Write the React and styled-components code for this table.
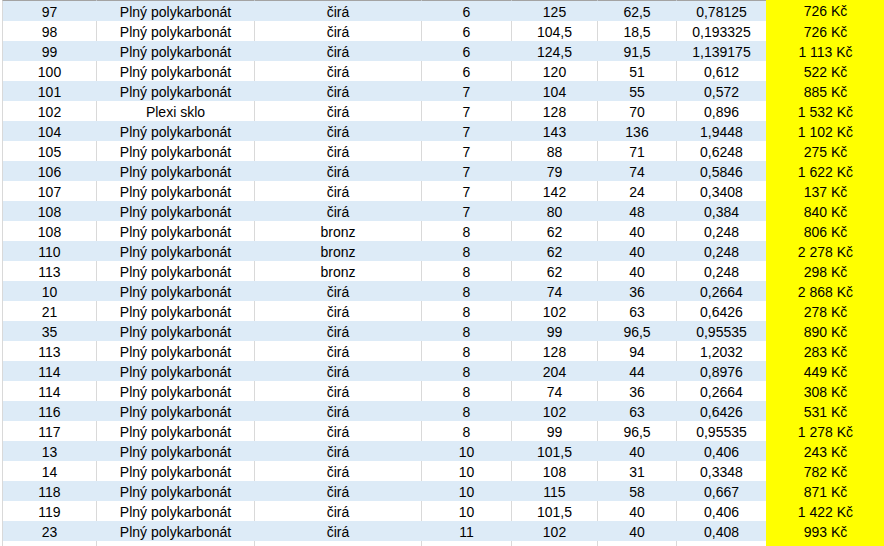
import React from 'react';
import styled, { createGlobalStyle } from 'styled-components';

const rows = [
  ['97', 'Plný polykarbonát', 'čirá', '6', '125', '62,5', '0,78125', '726 Kč'],
  ['98', 'Plný polykarbonát', 'čirá', '6', '104,5', '18,5', '0,193325', '726 Kč'],
  ['99', 'Plný polykarbonát', 'čirá', '6', '124,5', '91,5', '1,139175', '1 113 Kč'],
  ['100', 'Plný polykarbonát', 'čirá', '6', '120', '51', '0,612', '522 Kč'],
  ['101', 'Plný polykarbonát', 'čirá', '7', '104', '55', '0,572', '885 Kč'],
  ['102', 'Plexi sklo', 'čirá', '7', '128', '70', '0,896', '1 532 Kč'],
  ['104', 'Plný polykarbonát', 'čirá', '7', '143', '136', '1,9448', '1 102 Kč'],
  ['105', 'Plný polykarbonát', 'čirá', '7', '88', '71', '0,6248', '275 Kč'],
  ['106', 'Plný polykarbonát', 'čirá', '7', '79', '74', '0,5846', '1 622 Kč'],
  ['107', 'Plný polykarbonát', 'čirá', '7', '142', '24', '0,3408', '137 Kč'],
  ['108', 'Plný polykarbonát', 'čirá', '7', '80', '48', '0,384', '840 Kč'],
  ['108', 'Plný polykarbonát', 'bronz', '8', '62', '40', '0,248', '806 Kč'],
  ['110', 'Plný polykarbonát', 'bronz', '8', '62', '40', '0,248', '2 278 Kč'],
  ['113', 'Plný polykarbonát', 'bronz', '8', '62', '40', '0,248', '298 Kč'],
  ['10', 'Plný polykarbonát', 'čirá', '8', '74', '36', '0,2664', '2 868 Kč'],
  ['21', 'Plný polykarbonát', 'čirá', '8', '102', '63', '0,6426', '278 Kč'],
  ['35', 'Plný polykarbonát', 'čirá', '8', '99', '96,5', '0,95535', '890 Kč'],
  ['113', 'Plný polykarbonát', 'čirá', '8', '128', '94', '1,2032', '283 Kč'],
  ['114', 'Plný polykarbonát', 'čirá', '8', '204', '44', '0,8976', '449 Kč'],
  ['114', 'Plný polykarbonát', 'čirá', '8', '74', '36', '0,2664', '308 Kč'],
  ['116', 'Plný polykarbonát', 'čirá', '8', '102', '63', '0,6426', '531 Kč'],
  ['117', 'Plný polykarbonát', 'čirá', '8', '99', '96,5', '0,95535', '1 278 Kč'],
  ['13', 'Plný polykarbonát', 'čirá', '10', '101,5', '40', '0,406', '243 Kč'],
  ['14', 'Plný polykarbonát', 'čirá', '10', '108', '31', '0,3348', '782 Kč'],
  ['118', 'Plný polykarbonát', 'čirá', '10', '115', '58', '0,667', '871 Kč'],
  ['119', 'Plný polykarbonát', 'čirá', '10', '101,5', '40', '0,406', '1 422 Kč'],
  ['23', 'Plný polykarbonát', 'čirá', '11', '102', '40', '0,408', '993 Kč'],
];

const GlobalStyle = createGlobalStyle`
  html, body {
    margin: 0;
    padding: 0;
    background: #fff;
  }
`;

const App = () => (
  <>
    <GlobalStyle />
    <Sheet>
      {rows.map((row, i) => (
        <Row key={i} $band={i % 2 === 0} $first={i === 0}>
          {row.map((value, j) => (
            <Cell key={j} $price={j === 7}>
              {value.replace(/ (?=\d)/g, '\u00a0')}
            </Cell>
          ))}
        </Row>
      ))}
      <Row $band={false}>
        {Array.from({ length: 8 }).map((_, j) => (
          <Cell key={j} $price={j === 7} />
        ))}
      </Row>
    </Sheet>
  </>
);

const Sheet = styled.div`
  width: 884px;
  height: 546px;
  overflow: hidden;
  padding-left: 2px;
  box-sizing: border-box;
  font-family: 'Liberation Sans', Arial, sans-serif;
  font-size: 14px;
  color: #000;
`;

const Row = styled.div`
  display: grid;
  grid-template-columns: 94px 158px 167px 90px 86px 79px 90px 118px;
  height: ${(p) => (p.$first ? '21px' : '20px')};
  --fill: ${(p) => (p.$band ? '#ddebf7' : '#ffffff')};
  --grid: ${(p) => (p.$band ? '#ddebf7' : '#d9d9d9')};
  --top: ${(p) => (p.$first ? '1px solid #a3a3a3' : 'none')};
`;

const Cell = styled.div`
  display: flex;
  align-items: center;
  justify-content: center;
  white-space: nowrap;
  box-sizing: border-box;
  padding-top: 1px;
  background: ${(p) => (p.$price ? '#ffff00' : 'var(--fill)')};
  border-left: 1px solid ${(p) => (p.$price ? '#ffff00' : 'var(--grid)')};
  border-top: ${(p) => (p.$price ? 'none' : 'var(--top)')};

  &:first-child {
    border-left-color: #d9d9d9;
  }
`;

export default App;
